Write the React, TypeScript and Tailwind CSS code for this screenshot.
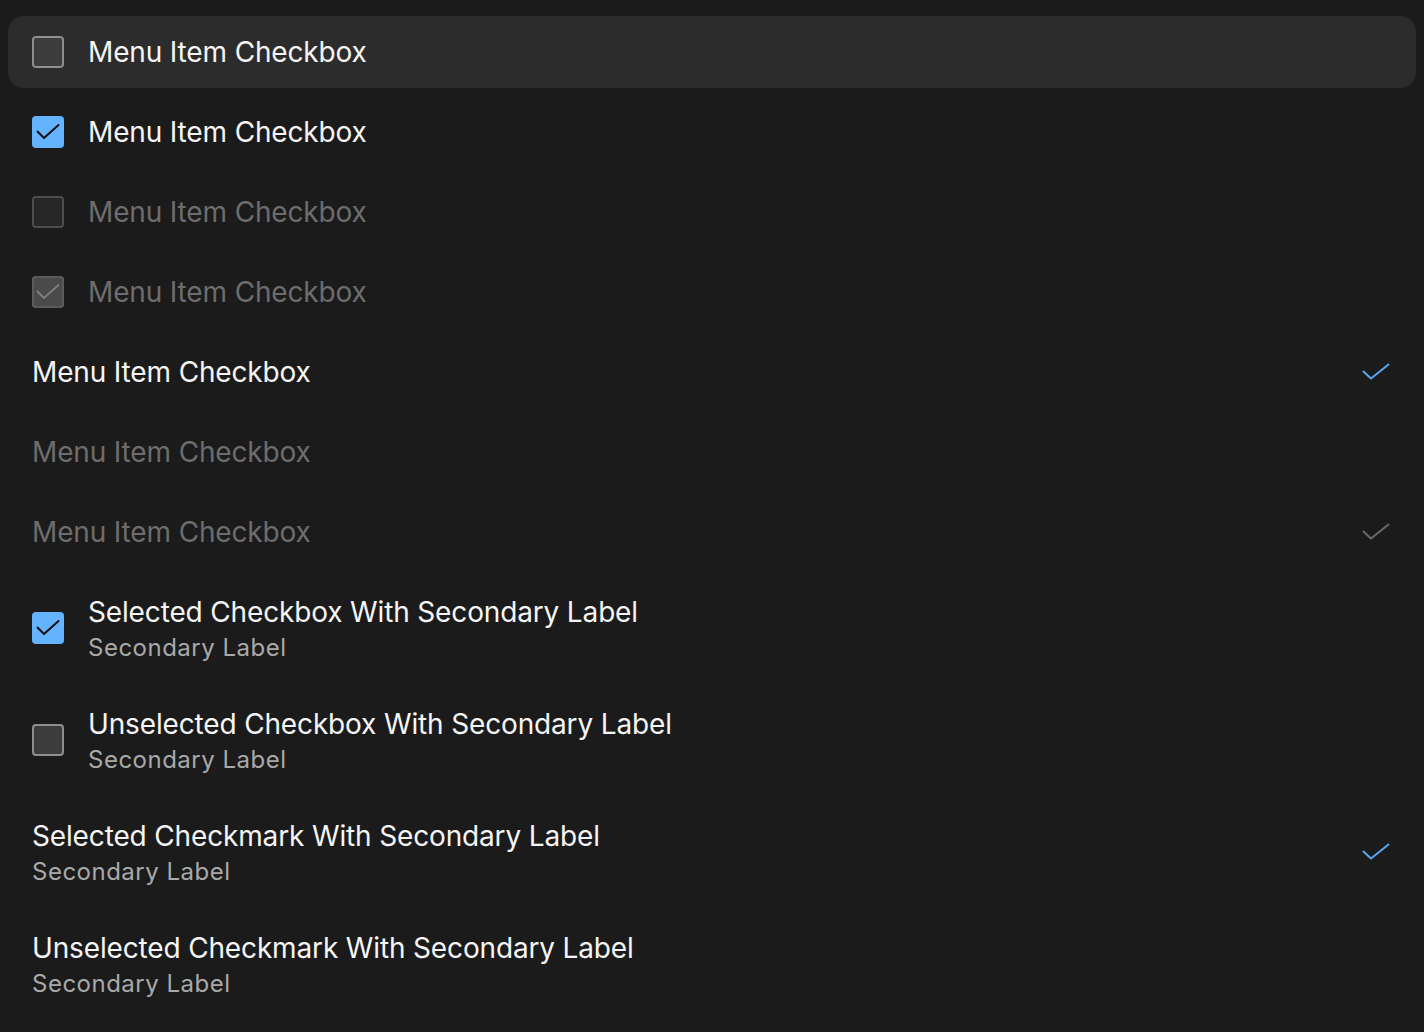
import React from 'react';

type Row = {
    label: string;
    secondary?: string;
    kind: 'box' | 'mark';
    checked: boolean;
    disabled?: boolean;
    hover?: boolean;
};

const rows: Row[] = [
    { label: 'Menu Item Checkbox', kind: 'box', checked: false, hover: true },
    { label: 'Menu Item Checkbox', kind: 'box', checked: true },
    { label: 'Menu Item Checkbox', kind: 'box', checked: false, disabled: true },
    { label: 'Menu Item Checkbox', kind: 'box', checked: true, disabled: true },
    { label: 'Menu Item Checkbox', kind: 'mark', checked: true },
    { label: 'Menu Item Checkbox', kind: 'mark', checked: false, disabled: true },
    { label: 'Menu Item Checkbox', kind: 'mark', checked: true, disabled: true },
    { label: 'Selected Checkbox With Secondary Label', secondary: 'Secondary Label', kind: 'box', checked: true },
    { label: 'Unselected Checkbox With Secondary Label', secondary: 'Secondary Label', kind: 'box', checked: false },
    { label: 'Selected Checkmark With Secondary Label', secondary: 'Secondary Label', kind: 'mark', checked: true },
    { label: 'Unselected Checkmark With Secondary Label', secondary: 'Secondary Label', kind: 'mark', checked: false },
];

const Box: React.FC<{ checked: boolean; disabled?: boolean }> = ({ checked, disabled }) => {
    if (checked) {
        return (
            <div
                className={`w-8 h-8 shrink-0 rounded-[4px] ${
                    disabled ? 'bg-[#4a4a4a] ring-2 ring-inset ring-[#5c5c5c]' : 'bg-[#63b3ff]'
                }`}
            >
                <svg width="32" height="32" viewBox="0 0 32 32" fill="none">
                    <path
                        d="M5.5 15.5 L12 22 L26.5 9"
                        stroke={disabled ? '#7e7e7e' : '#111111'}
                        strokeWidth="2"
                        strokeLinecap="round"
                        strokeLinejoin="round"
                    />
                </svg>
            </div>
        );
    }
    return (
        <div
            className={`w-8 h-8 shrink-0 rounded-[4px] border-2 ${
                disabled ? 'bg-[#262626] border-[#4e4e4e]' : 'bg-[#3c3c3c] border-[#8e8e8e]'
            }`}
        />
    );
};

const Mark: React.FC<{ disabled?: boolean }> = ({ disabled }) => (
    <svg width="32" height="32" viewBox="0 0 32 32" fill="none" className="shrink-0">
        <path
            d="M3.5 15.5 L11 22.5 L28.5 8.5"
            stroke={disabled ? '#6a6a6a' : '#58a8f0'}
            strokeWidth="2"
            strokeLinecap="round"
            strokeLinejoin="round"
        />
    </svg>
);

export default function App() {
    return (
        <div
            className="min-h-screen w-full bg-[#1b1b1b] px-2 py-4 flex flex-col gap-2"
            style={{ fontFamily: 'Inter, "Noto Sans", sans-serif' }}
        >
            {rows.map((r, i) => (
                <div
                    key={i}
                    className={`flex items-center gap-6 px-6 rounded-2xl ${r.secondary ? 'h-[104px]' : 'h-[72px]'} ${
                        r.hover ? 'bg-[#2c2c2c]' : ''
                    }`}
                >
                    {r.kind === 'box' && <Box checked={r.checked} disabled={r.disabled} />}
                    <div className="flex-1 flex flex-col">
                        <span
                            className={`text-[28px] leading-[40px] tracking-[-0.15px] ${
                                r.disabled ? 'text-[#6d6d6d]' : 'text-[#f5f5f5]'
                            }`}
                        >
                            {r.label}
                        </span>
                        {r.secondary && (
                            <span className="text-[24px] leading-8 text-[#a9a9a9] tracking-[0.5px]">{r.secondary}</span>
                        )}
                    </div>
                    {r.kind === 'mark' && r.checked && <Mark disabled={r.disabled} />}
                </div>
            ))}
        </div>
    );
}
